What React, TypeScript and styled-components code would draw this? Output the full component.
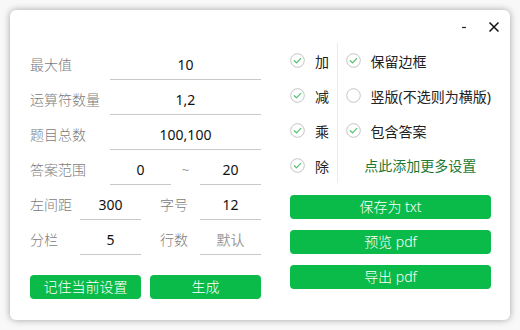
import React from "react";
import styled, { createGlobalStyle } from "styled-components";

const Global = createGlobalStyle`
  html, body { margin: 0; padding: 0; background: #f8f8f8; }
  body { font-family: "Noto Sans", "Noto Sans CJK SC", sans-serif; }
  * { box-sizing: border-box; }
`;

const Page = styled.div`
  width: 520px;
  height: 330px;
  padding: 10px;
`;

const Window = styled.div`
  width: 500px;
  height: 310px;
  background: #fff;
  border-radius: 6px;
  box-shadow: 0 0 7px rgba(0, 0, 0, 0.35);
  display: flex;
  flex-direction: column;
`;

const TitleBar = styled.div`
  height: 25px;
  display: flex;
  justify-content: flex-end;
  align-items: flex-end;
  padding-right: 8px;
  gap: 14px;
`;

const Ctrl = styled.div`
  width: 16px;
  height: 16px;
  display: flex;
  align-items: center;
  justify-content: center;
`;

const Body = styled.div`
  display: flex;
  padding-left: 20px;
  gap: 29px;
`;

const Left = styled.div`
  width: 231px;
  padding-top: 10px;
  display: flex;
  flex-direction: column;
`;

const Row = styled.div<{ cols: string }>`
  height: 35px;
  display: grid;
  grid-template-columns: ${(p) => p.cols};
  align-items: end;
`;

const Label = styled.div<{ indent?: number }>`
  font-size: 14px;
  font-weight: 300;
  color: #7c7c7c;
  height: 30px;
  line-height: 30px;
  padding-left: ${(p) => p.indent ?? 0}px;
  white-space: nowrap;
`;

const Field = styled.div<{ placeholder?: boolean }>`
  height: 30px;
  line-height: 30px;
  font-size: 14px;
  text-align: center;
  color: ${(p) => (p.placeholder ? "#9a9a9a" : "#111")};
  border-bottom: 1px solid #c9c9c9;
`;

const Tilde = styled.div`
  height: 30px;
  line-height: 30px;
  text-align: center;
  font-size: 13px;
  color: #999;
`;

const ButtonRow = styled.div`
  margin-top: 20px;
  display: flex;
  gap: 9px;
`;

const GreenButton = styled.div<{ w?: number }>`
  width: ${(p) => (p.w ? `${p.w}px` : "100%")};
  height: 24px;
  border-radius: 4px;
  background: #0abb4a;
  color: #fff;
  font-size: 14px;
  font-weight: 300;
  line-height: 24px;
  text-align: center;
`;

const Right = styled.div`
  width: 201px;
  padding-top: 8px;
  display: flex;
  flex-direction: column;
`;

const Options = styled.div`
  display: flex;
  height: 140px;
`;

const OpsCol = styled.div`
  width: 51px;
  border-right: 1px solid #ececec;
  display: flex;
  flex-direction: column;
`;

const SetCol = styled.div`
  flex: 1;
  padding-left: 8px;
  display: flex;
  flex-direction: column;
`;

const Option = styled.div`
  height: 35px;
  display: flex;
  align-items: center;
  gap: 10px;
  font-size: 14px;
  color: #222;
  white-space: nowrap;
`;

const Link = styled.div`
  height: 35px;
  line-height: 35px;
  text-align: center;
  font-size: 14px;
  color: #1d7a33;
  padding-left: 4px;
`;

const Actions = styled.div`
  margin-top: 12px;
  display: flex;
  flex-direction: column;
  gap: 11px;
`;

const Check = ({ on }: { on: boolean }) => (
  <svg width="15" height="15" viewBox="0 0 15 15">
    <circle cx="7.5" cy="7.5" r="6.8" fill="#fff" stroke="#c4c4c4" strokeWidth="1" />
    {on && (
      <path
        d="M4.3 7.7 L6.5 9.8 L10.8 5.4"
        fill="none"
        stroke="#52c06f"
        strokeWidth="1.2"
        strokeLinecap="round"
        strokeLinejoin="round"
      />
    )}
  </svg>
);

export default function App() {
  return (
    <>
      <Global />
      <Page>
        <Window>
          <TitleBar>
            <Ctrl>
              <svg width="10" height="10" viewBox="0 0 10 10">
                <line x1="3" y1="5.5" x2="7" y2="5.5" stroke="#222" strokeWidth="1.2" />
              </svg>
            </Ctrl>
            <Ctrl>
              <svg width="12" height="12" viewBox="0 0 12 12">
                <path d="M1.5 1.5 L10.5 10.5 M10.5 1.5 L1.5 10.5" stroke="#111" strokeWidth="1.5" />
              </svg>
            </Ctrl>
          </TitleBar>
          <Body>
            <Left>
              <Row cols="80px 1fr">
                <Label>最大值</Label>
                <Field>10</Field>
              </Row>
              <Row cols="80px 1fr">
                <Label>运算符数量</Label>
                <Field>1,2</Field>
              </Row>
              <Row cols="80px 1fr">
                <Label>题目总数</Label>
                <Field>100,100</Field>
              </Row>
              <Row cols="80px 61px 29px 61px">
                <Label>答案范围</Label>
                <Field>0</Field>
                <Tilde>~</Tilde>
                <Field>20</Field>
              </Row>
              <Row cols="50px 61px 59px 61px">
                <Label>左间距</Label>
                <Field>300</Field>
                <Label indent={19}>字号</Label>
                <Field>12</Field>
              </Row>
              <Row cols="50px 61px 59px 61px">
                <Label>分栏</Label>
                <Field>5</Field>
                <Label indent={19}>行数</Label>
                <Field placeholder>默认</Field>
              </Row>
              <ButtonRow>
                <GreenButton w={111}>记住当前设置</GreenButton>
                <GreenButton w={111}>生成</GreenButton>
              </ButtonRow>
            </Left>
            <Right>
              <Options>
                <OpsCol>
                  <Option><Check on />加</Option>
                  <Option><Check on />减</Option>
                  <Option><Check on />乘</Option>
                  <Option><Check on />除</Option>
                </OpsCol>
                <SetCol>
                  <Option><Check on />保留边框</Option>
                  <Option><Check on={false} />竖版(不选则为横版)</Option>
                  <Option><Check on />包含答案</Option>
                  <Link>点此添加更多设置</Link>
                </SetCol>
              </Options>
              <Actions>
                <GreenButton>保存为 txt</GreenButton>
                <GreenButton>预览 pdf</GreenButton>
                <GreenButton>导出 pdf</GreenButton>
              </Actions>
            </Right>
          </Body>
        </Window>
      </Page>
    </>
  );
}
